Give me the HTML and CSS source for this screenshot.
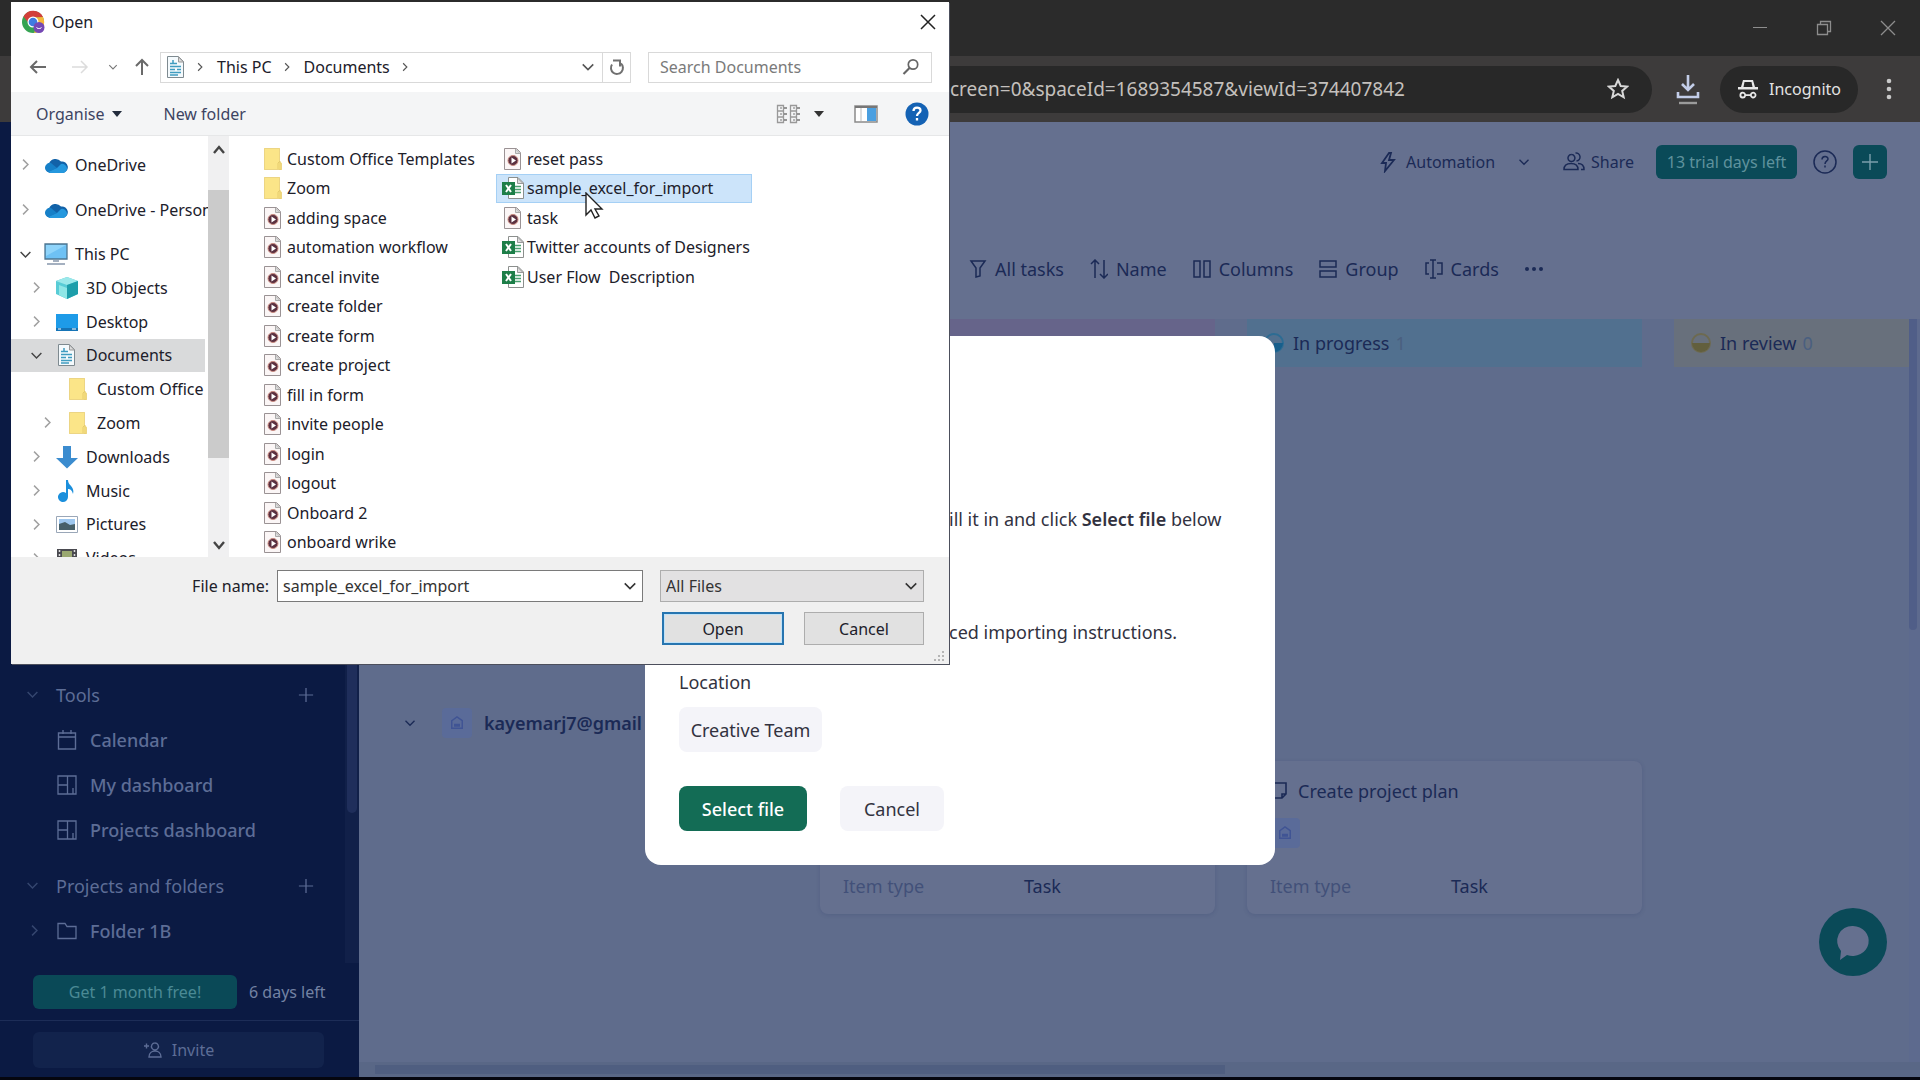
FILE: index.html
```html
<!DOCTYPE html>
<html lang="en">
<head>
    <meta charset="UTF-8">
    <title>Open</title>
    <link rel="stylesheet" href="styles.css">
</head>
<body>
<!-- shared icons -->
<svg class="defs" aria-hidden="true">
    <symbol id="i-right" viewBox="0 0 16 16"><path d="M5 2l6 6-6 6" fill="none" stroke="currentColor" stroke-width="1.8"/></symbol>
    <symbol id="i-down" viewBox="0 0 16 16"><path d="M2 5l6 6 6-6" fill="none" stroke="currentColor" stroke-width="1.8"/></symbol>
    <symbol id="i-up" viewBox="0 0 16 16"><path d="M3 11l5-6 5 6" fill="none" stroke="currentColor" stroke-width="2.4"/></symbol>
    <symbol id="i-plus" viewBox="0 0 18 18"><path d="M9 1v16M1 9h16" fill="none" stroke="currentColor" stroke-width="1.4"/></symbol>
    <symbol id="i-video" viewBox="0 0 24 24">
        <path d="M3.500 1.500h12l4 4v17h-16z" fill="#fbf6f6" stroke="#9a9294"/>
        <path d="M14.500 2v4.500h4.500z" fill="#ddd" stroke="#aaa"/>
        <circle cx="12" cy="13.500" r="5" fill="#5a3040"/>
        <circle cx="12" cy="13.500" r="5" fill="none" stroke="#c98a80" stroke-width="1"/>
        <path d="M10.500 10.500l4.500 3-4.500 3z" fill="#fff"/>
    </symbol>
    <symbol id="i-excel" viewBox="0 0 24 24">
        <path d="M7.500 1.500h9.500l5.500 5.500v15.500h-15z" fill="#fff" stroke="#8b8f8d"/>
        <path d="M16.500 2v5.500h5.500z" fill="#ddd" stroke="#999"/>
        <path d="M14 10.500h6M14 13.500h6M14 16.500h6" stroke="#4ba070" stroke-width="1.400"/>
        <path d="M1 6h13v13h-13z" fill="#1d7e48"/>
        <path d="M5 9l5 7M10 9l-5 7" stroke="#fff" stroke-width="2"/>
    </symbol>
    <symbol id="i-folder" viewBox="0 0 24 24">
        <path d="M3 1h16v14l2 1v7H3z" fill="#fbe588"/>
        <path d="M3.500 1.500h15v14l2 1v6h-17z" fill="none" stroke="#ecd584"/>
        <path d="M17 22v-6l2-2v9" fill="none" stroke="#e6cc6c"/>
    </symbol>
    <symbol id="i-doc" viewBox="0 0 24 24">
        <path d="M3.500 1.500h11l5 5v16h-16z" fill="#f4fafd" stroke="#7e8a90"/>
        <path d="M14.500 2v5h5z" fill="#dcdcdc" stroke="#999"/>
        <path d="M9 5v4M6 8.500h7M6 11.500h11M6 14.500h5M13 14.500h4M6 17.500h11M6 20h8" stroke="#3f9cc0" stroke-width="1.500"/>
    </symbol>
    <symbol id="i-cloud" viewBox="0 0 24 24">
        <path d="M6 20a5 5 0 0 1-1-9.500A7 7 0 0 1 17 8.500a5.500 5.500 0 0 1 2 11.500z" fill="#1262a8"/>
        <path d="M1 14a5 5 0 0 1 6-4l6 5-9 4a5 5 0 0 1-3-5z" fill="#1680c8"/>
        <path d="M4 19l9-4 4-4a5 5 0 0 1 6 4 4.500 4.500 0 0 1-4 5H6z" fill="#2598de"/>
    </symbol>
    <symbol id="i-dash" viewBox="0 0 20 20"><path d="M1 1h18v18H1zM10.500 1v18M1 10h9.500M6 10v0M16 13v6" fill="none" stroke="currentColor" stroke-width="1.300"/></symbol>
    <symbol id="i-people" viewBox="0 0 22 22"><path d="M8.500 3.500a3.500 3.500 0 1 1-.1 0M12.500 2a4 4 0 1 1 1 8M1 18.500c0-4 3-6 7-6s7 2 7 6zM15 12.500c4 0 6 2.500 6 6h-3" fill="none" stroke="currentColor" stroke-width="1.500"/></symbol>
    <symbol id="i-avatar" viewBox="0 0 24 24"><path d="M5 9l7-5 7 5v10H5z" fill="none" stroke="currentColor" stroke-width="2"/><path d="M8 13h8v4h-8z" fill="currentColor"/></symbol>
</svg>

<!-- browser -->
<header class="browser">
    <div class="browser-title">
        <button class="win-btn" aria-label="Minimise"><svg width="16" height="16" viewBox="0 0 16 16"><path d="M1 7.500h14" stroke="currentColor"/></svg></button>
        <button class="win-btn" aria-label="Restore"><svg width="16" height="16" viewBox="0 0 16 16"><path d="M1.500 4.500h10v10h-10zM4.500 4v-2.500h10v10H12" fill="none" stroke="currentColor" stroke-width="1.300"/></svg></button>
        <button class="win-btn" aria-label="Close"><svg width="16" height="16" viewBox="0 0 16 16"><path d="M1 1l14 14M15 1L1 15" stroke="currentColor" stroke-width="1.300"/></svg></button>
    </div>
    <div class="browser-bar">
        <div class="omnibox">
            <span class="url">creen=0&amp;spaceId=1689354587&amp;viewId=374407842</span>
            <svg width="22" height="22" viewBox="0 0 22 22"><path d="M11 2l2.700 6 6.500.600-5 4.300 1.500 6.400L11 16l-5.700 3.300 1.500-6.400-5-4.300 6.500-.600z" fill="none" stroke="#d8d8d8" stroke-width="2"/></svg>
        </div>
        <svg class="download" width="24" height="32" viewBox="0 0 24 32"><path d="M12 2v14M6 11l6 6 6-6M2 19v5h20v-5" fill="none" stroke="#c3cde8" stroke-width="2.600"/><path d="M3 30h18" stroke="#9b9b9b" stroke-width="2.400"/></svg>
        <button class="incognito">
            <svg width="22" height="22" viewBox="0 0 22 22" fill="#e8e8e8"><path d="M6 2h10l2 7h3v2.500H1V9h3zM7.500 4L6.500 9h9l-1-5z" fill-rule="evenodd"/><path d="M2.500 17a3.300 3.300 0 0 1 6.500-.800h4a3.300 3.300 0 1 1 0 1.800h-4a3.300 3.300 0 0 1-6.500-1z"/><circle cx="5.800" cy="17" r="1.500" fill="#282828"/><circle cx="16.200" cy="17" r="1.500" fill="#282828"/></svg>
            Incognito
        </button>
        <button class="dots" aria-label="Menu"><svg width="6" height="22" viewBox="0 0 6 22" fill="#c9c9c9"><circle cx="3" cy="3" r="2.300"/><circle cx="3" cy="11" r="2.300"/><circle cx="3" cy="19" r="2.300"/></svg></button>
    </div>
</header>

<div class="app">
    <aside class="sidebar">
        <div class="side-scroll">
            <nav class="side-nav">
                <div class="side-head"><svg class="arrow"><use href="#i-down"/></svg><span>Tools</span><button aria-label="Add tool"><svg width="16" height="16"><use href="#i-plus"/></svg></button></div>
                <a class="side-item" href="#"><svg viewBox="0 0 20 20"><path d="M1.500 3h17v16h-17zM1.500 7h17M6 0v4M14 0v4" fill="none" stroke="currentColor" stroke-width="1.400"/></svg>Calendar</a>
                <a class="side-item" href="#"><svg><use href="#i-dash"/></svg>My dashboard</a>
                <a class="side-item" href="#"><svg><use href="#i-dash"/></svg>Projects dashboard</a>
                <div class="side-head second"><svg class="arrow"><use href="#i-down"/></svg><span>Projects and folders</span><button aria-label="Add folder"><svg width="16" height="16"><use href="#i-plus"/></svg></button></div>
                <a class="side-item folder" href="#"><svg class="arrow"><use href="#i-right"/></svg><svg viewBox="0 0 20 20"><path d="M1 2.500h7l2 3h9v12H1z" fill="none" stroke="currentColor" stroke-width="1.300"/></svg>Folder 1B</a>
            </nav>
            <div class="side-track"><div class="side-thumb"></div></div>
        </div>
        <div class="trial">
            <button class="free-btn">Get 1 month free!</button>
            <span>6 days left</span>
        </div>
        <div class="invite-row">
            <button class="invite"><svg width="20" height="20" viewBox="0 0 20 20"><path d="M12 3a3.500 3.500 0 1 1-.1 0M6 17c0-8 12-8 12 0zM1 6h5M3.500 3.500v5" fill="none" stroke="currentColor" stroke-width="1.400"/></svg>Invite</button>
        </div>
    </aside>

    <main class="main">
        <div class="top-actions">
            <button class="act auto"><svg width="18" height="22" viewBox="0 0 18 22"><path d="M10 2L3 12h4l-1 8 9-11h-5l2-7z" fill="none" stroke="currentColor" stroke-width="1.800"/></svg>Automation<svg class="auto-arrow" width="12" height="12"><use href="#i-down"/></svg></button>
            <button class="act"><svg width="22" height="22"><use href="#i-people"/></svg>Share</button>
            <button class="green">13 trial days left</button>
            <button class="round" aria-label="Help"><svg width="24" height="24" viewBox="0 0 24 24" fill="none" stroke="currentColor" stroke-width="1.500"><circle cx="12" cy="12" r="11"/><path d="M9 9.500c0-4 6-4 6-.500 0 2-3 2-3 5M12 15.500v2"/></svg></button>
            <button class="green add" aria-label="Add"><svg width="18" height="18"><use href="#i-plus"/></svg></button>
        </div>
        <div class="view-bar">
            <button><svg viewBox="0 0 18 20"><path d="M2 2h14l-5 7v8l-4 1V9z" fill="none" stroke="currentColor" stroke-width="1.500"/></svg>All tasks</button>
            <button><svg viewBox="0 0 18 20"><path d="M5 19V1M1 5l4-4 4 4M14 1v18M10 15l4 4 4-4" fill="none" stroke="currentColor" stroke-width="1.500"/></svg>Name</button>
            <button><svg viewBox="0 0 18 20"><path d="M1 2h6v16H1zM11 2h6v16h-6z" fill="none" stroke="currentColor" stroke-width="1.500"/></svg>Columns</button>
            <button><svg viewBox="0 0 18 20"><path d="M1 2h16v6H1zM1 12h16v6H1z" fill="none" stroke="currentColor" stroke-width="1.500"/></svg>Group</button>
            <button><svg viewBox="0 0 18 20"><path d="M4 4H1v11h3M12 4h5v11h-5M8 1v18M5 1h6M5 19h6" fill="none" stroke="currentColor" stroke-width="1.500"/></svg>Cards</button>
            <button aria-label="More"><svg viewBox="0 0 18 20" fill="currentColor"><circle cx="2" cy="10" r="2"/><circle cx="9" cy="10" r="2"/><circle cx="16" cy="10" r="2"/></svg></button>
        </div>
        <div class="board">
            <div class="board-cols">
                <div class="lane">
                    <button class="lane-toggle" aria-label="Collapse"><svg width="12" height="12"><use href="#i-down"/></svg></button>
                    <span class="avatar"><svg width="18" height="18"><use href="#i-avatar"/></svg></span>
                    <b>kayemarj7@gmail</b>
                </div>
                <section class="col">
                    <div class="col-head pink"></div>
                    <article class="card">
                        <dl><dt>Item type</dt><dd>Task</dd></dl>
                    </article>
                </section>
                <section class="col">
                    <h2 class="col-head blue"><svg width="20" height="20" viewBox="0 0 20 20"><circle cx="10" cy="10" r="9" fill="none" stroke="#2c6c93" stroke-width="2"/><path d="M10 10h9a9 9 0 0 1-9 9z" fill="#175f8c"/></svg>In progress <span>1</span></h2>
                    <article class="card">
                        <h3><svg width="18" height="18" viewBox="0 0 18 18"><path d="M1 1h15v11l-4 4H1zM16 12h-4v4" fill="none" stroke="currentColor" stroke-width="1.600"/></svg>Create project plan</h3>
                        <span class="avatar"><svg width="18" height="18"><use href="#i-avatar"/></svg></span>
                        <dl><dt>Item type</dt><dd>Task</dd></dl>
                    </article>
                </section>
                <section class="col last">
                    <h2 class="col-head sand"><svg width="20" height="20" viewBox="0 0 20 20"><circle cx="10" cy="10" r="9" fill="none" stroke="#6d6a50" stroke-width="2"/><path d="M1 10h18a9 9 0 0 1-18 0z" fill="#625f3d"/></svg>In review <span>0</span></h2>
                </section>
            </div>
            <div class="v-track"><div class="v-thumb"></div></div>
            <div class="h-track"><div class="h-thumb"></div></div>
        </div>
    </main>

    <button class="chat" aria-label="Chat"><svg width="40" height="40" viewBox="0 0 40 40"><path d="M20 4a16 15 0 1 1-6 29l-7 5 1-9A15 15 0 0 1 20 4z" fill="#65708f"/></svg></button>

    <div class="overlay">
        <div class="modal">
            <p>ill it in and click <b>Select file</b> below</p>
            <p>ced importing instructions.</p>
            <div class="location">Location</div>
            <button class="grey team">Creative Team</button>
            <div class="modal-btns">
                <button class="select-file">Select file</button>
                <button class="grey">Cancel</button>
            </div>
        </div>
    </div>
</div>

<!-- file picker window -->
<div class="picker">
    <div class="picker-title">
        <svg width="24" height="24" viewBox="0 0 24 24"><circle cx="12" cy="12" r="11" fill="#35a352"/><path d="M2.500 6.500A11 11 0 0 1 22 7l-10 .500-4 6z" fill="#d23f3a"/><path d="M22 7a11 11 0 0 1-9 16l4-10-5-5.500z" fill="#f6b73a"/><circle cx="12" cy="12" r="5.500" fill="#fff"/><circle cx="12" cy="12" r="4.300" fill="#3f7be0"/><circle cx="18" cy="17.500" r="5.500" fill="#7548b4"/><path d="M15.500 17l1.500 2 1-1 1 1 1.500-2" fill="none" stroke="#e6dcf5"/></svg>
        <span>Open</span>
        <button class="close" aria-label="Close"><svg width="16" height="16" viewBox="0 0 16 16"><path d="M1 1l14 14M15 1L1 15" stroke="#222" stroke-width="1.500"/></svg></button>
    </div>
    <div class="picker-nav">
        <button aria-label="Back"><svg width="18" height="16" viewBox="0 0 18 16"><path d="M17 8H2M8 2L2 8l6 6" fill="none" stroke="#6a6a6a" stroke-width="2"/></svg></button>
        <button aria-label="Forward"><svg width="18" height="16" viewBox="0 0 18 16"><path d="M1 8h15M10 2l6 6-6 6" fill="none" stroke="#dcdcdc" stroke-width="1.500"/></svg></button>
        <button class="recent" aria-label="Recent"><svg width="10" height="10"><use href="#i-down"/></svg></button>
        <button aria-label="Up"><svg width="16" height="18" viewBox="0 0 16 18"><path d="M8 17V2M2 8l6-6 6 6" fill="none" stroke="#6a6a6a" stroke-width="2"/></svg></button>
        <div class="address">
            <svg width="24" height="24"><use href="#i-doc"/></svg>
            <svg class="sep" width="10" height="10"><use href="#i-right"/></svg>
            <a href="#">This PC</a>
            <svg class="sep" width="10" height="10"><use href="#i-right"/></svg>
            <a href="#">Documents</a>
            <svg class="sep" width="10" height="10"><use href="#i-right"/></svg>
            <button class="addr-drop" aria-label="Previous locations"><svg width="14" height="14"><use href="#i-down"/></svg></button>
            <button class="refresh" aria-label="Refresh"><svg width="18" height="18" viewBox="0 0 18 18"><path d="M4 6.500a6 6 0 1 0 9-1M5 2.500h7v6" fill="none" stroke="#707070" stroke-width="2"/></svg></button>
        </div>
        <label class="search">
            <input type="text" placeholder="Search Documents" aria-label="Search Documents">
            <svg width="18" height="18" viewBox="0 0 18 18"><circle cx="11" cy="6.500" r="4.700" fill="none" stroke="#666" stroke-width="1.700"/><path d="M7.500 10L1.500 16" stroke="#666" stroke-width="2.200"/></svg>
        </label>
    </div>
    <div class="picker-tools">
        <button>Organise <svg width="12" height="12" viewBox="0 0 12 12"><path d="M1 3h10L6 9z" fill="#222c3c"/></svg></button>
        <button>New folder</button>
        <button class="view-btn" aria-label="Change view">
            <svg width="24" height="20" viewBox="0 0 24 20"><path d="M1.500 1.500h6v17h-6zM1.500 7h6M1.500 13h6M14.500 1.500h6v17h-6zM14.500 7h6M14.500 13h6" fill="none" stroke="#999" stroke-width="1.300"/><path d="M8 4h3M8 10h3M8 16h3M21 4h3M21 10h3M21 16h3" stroke="#777" stroke-width="1.500"/><path d="M4 4h2M4 10h2M4 16h2M17 4h2M17 10h2M17 16h2" stroke="#777"/></svg>
            <svg width="12" height="12" viewBox="0 0 12 12"><path d="M1 3h10L6 9z" fill="#333"/></svg>
        </button>
        <button aria-label="Preview pane"><svg width="24" height="18" viewBox="0 0 24 18"><path d="M1 1h22v16H1z" fill="#fff" stroke="#8b8b8b" stroke-width="1.500"/><path d="M1 2h22" stroke="#777" stroke-width="2"/><path d="M13 3h9v13h-9z" fill="#4a9fe0"/><path d="M7 3v13" stroke="#bbb"/></svg></button>
        <button aria-label="Get help"><svg width="24" height="24" viewBox="0 0 24 24"><circle cx="12" cy="12" r="11.500" fill="#1462b4"/><path d="M8.500 9c0-4.500 7-4.500 7-.500 0 2.500-3.500 2.500-3.500 5.500M12 16v2.500" fill="none" stroke="#fff" stroke-width="2.300"/></svg></button>
    </div>
    <div class="picker-body">
        <div class="tree">
            <div class="node root"><svg class="arrow"><use href="#i-right"/></svg><svg><use href="#i-cloud"/></svg>OneDrive</div>
            <div class="node root"><svg class="arrow"><use href="#i-right"/></svg><svg><use href="#i-cloud"/></svg>OneDrive - Person</div>
            <div class="node pc"><svg class="arrow open"><use href="#i-down"/></svg><svg viewBox="0 0 24 24"><path d="M1 2h22v15H1z" fill="#6ec1f4" stroke="#4d7590" stroke-width="1.300"/><path d="M2 3h20L2 14z" fill="#8fd4fa"/><path d="M9 18h6v2H9zM3 21h18v2H3z" fill="#a4b0c0"/></svg>This PC</div>
            <div class="branch">
                <div class="node"><svg class="arrow"><use href="#i-right"/></svg><svg viewBox="0 0 24 24"><path d="M1 5l11-4 11 4v13l-11 5-11-5z" fill="#58ccd6"/><path d="M1 5l11 4 11-4-11-4z" fill="#9be8ea"/><path d="M12 9v14l11-5V5z" fill="#1d9eaa"/><path d="M4 9l8 3v11l-8-4z" fill="#8fe6e6"/></svg>3D Objects</div>
                <div class="node"><svg class="arrow"><use href="#i-right"/></svg><svg viewBox="0 0 24 24"><path d="M1 4h22v17H1z" fill="#1e9be8"/><path d="M1 18h22v3H1z" fill="#1674b6"/><path d="M3 19h3M17 19h4" stroke="#fff"/></svg>Desktop</div>
                <div class="node active"><svg class="arrow open"><use href="#i-down"/></svg><svg><use href="#i-doc"/></svg>Documents</div>
                <div class="node deep"><svg class="arrow"></svg><svg><use href="#i-folder"/></svg>Custom Office</div>
                <div class="node deep"><svg class="arrow"><use href="#i-right"/></svg><svg><use href="#i-folder"/></svg>Zoom</div>
                <div class="node"><svg class="arrow"><use href="#i-right"/></svg><svg viewBox="0 0 24 24"><path d="M8 1h8v12h7L12 23.500 1 13h7z" fill="#3b8ccf"/></svg>Downloads</div>
                <div class="node"><svg class="arrow"><use href="#i-right"/></svg><svg viewBox="0 0 24 24"><path d="M11 1h2c0 6 7 6 5 14-1-4-3-5-5-5v8a5 5 0 1 1-2-4z" fill="#1b8fdc"/></svg>Music</div>
                <div class="node"><svg class="arrow"><use href="#i-right"/></svg><svg viewBox="0 0 24 24"><path d="M1.500 4.500h21v16h-21z" fill="#fff" stroke="#9aa7b8"/><path d="M4 7h16v11H4z" fill="#9dc7ef"/><path d="M4 12l6-2 5 3 5-1v6H4z" fill="#47606a"/></svg>Pictures</div>
                <div class="node"><svg class="arrow"><use href="#i-right"/></svg><svg viewBox="0 0 24 24"><path d="M2 3h20v18H2z" fill="#4a4a50"/><path d="M7 5h10v6H7z" fill="#9aa870"/><path d="M7 13h10v6H7z" fill="#c9b54e"/><path d="M4.500 4v16M19.500 4v16" stroke="#ddd" stroke-width="1.500" stroke-dasharray="2 2"/></svg>Videos</div>
            </div>
        </div>
        <div class="tree-track">
            <svg width="16" height="16"><use href="#i-up"/></svg>
            <div class="tree-thumb"></div>
            <svg class="flip" width="16" height="16"><use href="#i-up"/></svg>
        </div>
        <ul class="files">
            <li><svg><use href="#i-folder"/></svg>Custom Office Templates</li>
            <li><svg><use href="#i-folder"/></svg>Zoom</li>
            <li><svg><use href="#i-video"/></svg>adding space</li>
            <li><svg><use href="#i-video"/></svg>automation workflow</li>
            <li><svg><use href="#i-video"/></svg>cancel invite</li>
            <li><svg><use href="#i-video"/></svg>create folder</li>
            <li><svg><use href="#i-video"/></svg>create form</li>
            <li><svg><use href="#i-video"/></svg>create project</li>
            <li><svg><use href="#i-video"/></svg>fill in form</li>
            <li><svg><use href="#i-video"/></svg>invite people</li>
            <li><svg><use href="#i-video"/></svg>login</li>
            <li><svg><use href="#i-video"/></svg>logout</li>
            <li><svg><use href="#i-video"/></svg>Onboard 2</li>
            <li><svg><use href="#i-video"/></svg>onboard wrike</li>
            <li><svg><use href="#i-video"/></svg>reset pass</li>
            <li class="selected"><svg><use href="#i-excel"/></svg>sample_excel_for_import</li>
            <li><svg><use href="#i-video"/></svg>task</li>
            <li><svg><use href="#i-excel"/></svg>Twitter accounts of Designers</li>
            <li><svg><use href="#i-excel"/></svg>User Flow&nbsp; Description</li>
        </ul>
    </div>
    <div class="picker-foot">
        <label for="fname">File name:</label>
        <div class="combo">
            <input type="text" id="fname" value="sample_excel_for_import">
            <svg width="14" height="14"><use href="#i-down"/></svg>
        </div>
        <div class="combo types">
            <select aria-label="File type"><option>All Files</option></select>
            <svg width="14" height="14"><use href="#i-down"/></svg>
        </div>
        <div class="foot-btns">
            <button class="open-btn">Open</button>
            <button>Cancel</button>
        </div>
    </div>
    <svg class="grip" width="12" height="12" viewBox="0 0 12 12" fill="#b5b5b5"><path d="M9 1h2v2H9zM9 5h2v2H9zM9 9h2v2H9zM5 5h2v2H5zM5 9h2v2H5zM1 9h2v2H1z"/></svg>
    <svg class="cursor" width="20" height="28" viewBox="0 0 20 28"><path d="M2 1v22l5-5 4 8 4-2-4-7h7z" fill="#fff" stroke="#222" stroke-width="1.400"/></svg>
</div>
</body>
</html>
```
FILE: styles.css
```css
* {
    box-sizing: border-box;
}

body {
    margin: 0;
    height: 100vh;
    padding-bottom: 3px;
    display: flex;
    flex-direction: column;
    position: relative;
    overflow: hidden;
    background: #05060f;
    font-family: "Noto Sans", "Open Sans", sans-serif;
    font-size: 18px;
    line-height: 24px;
}

button, input, select {
    font: inherit;
    color: inherit;
    margin: 0;
    padding: 0;
    border: none;
    background: none;
    outline: none;
}

a {
    color: inherit;
    text-decoration: none;
}

svg {
    display: block;
    flex: none;
}

.defs {
    width: 0;
    height: 0;
    position: absolute;
}

/* browser */
.browser {
    background: #2b2b2b;
}

.browser-title {
    height: 56px;
    display: flex;
    justify-content: flex-end;
    align-items: center;
    gap: 48px;
    padding-right: 24px;
    color: #8d8d8d;
}

.browser-bar {
    height: 66px;
    display: flex;
    align-items: center;
    background: #3d3b3b;
    padding: 0 28px 0 100px;
}

.omnibox {
    flex: 1;
    height: 47px;
    border-radius: 24px;
    background: #282828;
    color: #c4c0bd;
    display: flex;
    align-items: center;
    justify-content: space-between;
    padding: 0 23px 0 850px;
    font-size: 19px;
}

.download {
    margin: 0 20px 0 24px;
}

.incognito {
    height: 47px;
    width: 138px;
    border-radius: 24px;
    background: #282828;
    color: #e3e3e3;
    display: flex;
    align-items: center;
    gap: 10px;
    padding-left: 17px;
    font-size: 16px;
}

.dots {
    margin-left: 28px;
}

/* app */
.app {
    flex: 1;
    min-height: 0;
    display: flex;
    position: relative;
}

.sidebar {
    width: 359px;
    background: #0b1a43;
    color: #5d6d96;
    display: flex;
    flex-direction: column;
}

.side-scroll {
    flex: 1;
    display: flex;
    align-items: stretch;
}

.side-nav {
    flex: 1;
    display: flex;
    flex-direction: column;
    justify-content: flex-end;
    padding-bottom: 10px;
}

.side-head, .side-item {
    height: 45px;
    display: flex;
    align-items: center;
}

.side-head {
    padding: 0 31px 0 26px;
}

.side-head.second {
    margin-top: 11px;
}

.side-head span {
    flex: 1;
}

.sidebar .arrow {
    width: 13px;
    height: 13px;
    margin-right: 17px;
    color: #35466f;
}

.side-item {
    padding-left: 57px;
    gap: 13px;
    font-weight: 500;
}

.side-item svg {
    width: 20px;
    height: 20px;
}

.side-item.folder {
    padding-left: 28px;
}

.side-item.folder .arrow {
    margin-right: 3px;
}

.side-track {
    width: 14px;
    background: #112049;
}

.side-thumb {
    width: 10px;
    height: 691px;
    margin: 0 auto;
    border-radius: 0 0 5px 5px;
    background: #1f2e5b;
}

.trial {
    height: 58px;
    display: flex;
    align-items: center;
    gap: 12px;
    padding-left: 33px;
    font-size: 16px;
    color: #7382a3;
    border-bottom: 1px solid #1d2d57;
}

.free-btn {
    width: 204px;
    height: 34px;
    border-radius: 6px;
    background: #0a4957;
    color: #4a8a95;
}

.invite-row {
    height: 56px;
    padding: 11px 35px 9px 33px;
}

.invite {
    width: 100%;
    height: 36px;
    border-radius: 6px;
    background: #12234c;
    display: flex;
    align-items: center;
    justify-content: center;
    gap: 9px;
    font-size: 16px;
}

.main {
    flex: 1;
    min-width: 0;
    display: flex;
    flex-direction: column;
    background: #65708f;
    color: #1b2a56;
}

.top-actions {
    height: 80px;
    display: flex;
    align-items: center;
    justify-content: flex-end;
    padding-right: 33px;
    font-size: 16px;
}

.act {
    display: flex;
    align-items: center;
    gap: 6px;
    height: 34px;
    margin-right: 22px;
}

.auto {
    gap: 9px;
    margin-right: 33px;
}

.auto-arrow {
    margin-left: 14px;
}

.green {
    width: 141px;
    height: 34px;
    border-radius: 6px;
    background: #0a4a58;
    color: #5f929d;
}

.green.add {
    width: 34px;
    display: flex;
    align-items: center;
    justify-content: center;
    color: #7b9fac;
}

.round {
    margin: 0 16px;
}

.view-bar {
    height: 134px;
    display: flex;
    align-items: center;
    gap: 26px;
    padding-left: 610px;
}

.view-bar button {
    display: flex;
    align-items: center;
    gap: 8px;
}

.view-bar svg {
    width: 18px;
    height: 20px;
}

.board {
    flex: 1;
    display: grid;
    grid-template-columns: 1fr 11px;
    grid-template-rows: 1fr 15px;
    background: #5f6c8c;
    margin-top: -17px;
}

.board-cols {
    display: flex;
    gap: 32px;
    min-width: 0;
    overflow: hidden;
}

.lane {
    width: 429px;
    display: flex;
    align-items: center;
    align-self: flex-start;
    height: 30px;
    margin-top: 389px;
    padding-left: 45px;
    font-weight: 600;
}

.lane b {
    font-weight: 600;
    margin-left: 12px;
}

.lane-toggle {
    margin-right: 26px;
}

.avatar {
    width: 30px;
    height: 30px;
    border-radius: 4px;
    background: #5a6b99;
    color: #405494;
    display: flex;
    align-items: center;
    justify-content: center;
}

.col {
    width: 395px;
    flex: none;
}

.col.last {
    flex: 1;
}

.col-head {
    height: 48px;
    margin: 0;
    display: flex;
    align-items: center;
    gap: 9px;
    padding-left: 17px;
    font-size: 18px;
    font-weight: 400;
}

.col-head span {
    color: #4a5f80;
    margin-left: -3px;
}

.pink {
    background: #66648a;
}

.blue {
    background: #51708f;
}

.sand {
    background: #68707c;
}

.card {
    height: 153px;
    margin-top: 394px;
    padding: 18px 23px 16px;
    border-radius: 8px;
    background: #65708f;
    box-shadow: 0 1px 4px rgba(40, 55, 100, .2);
    display: flex;
    flex-direction: column;
}

.card h3 {
    margin: 0;
    font-size: 18px;
    font-weight: 400;
    display: flex;
    align-items: center;
    gap: 10px;
}

.card .avatar {
    margin-top: 15px;
}

.card dl {
    display: flex;
    margin: auto 0 0;
    color: #425079;
}

.card dt {
    width: 181px;
}

.card dd {
    margin: 0;
    color: #1b2a56;
}

.v-track {
    background: #5d6a8e;
}

.v-thumb {
    height: 311px;
    width: 8px;
    border-radius: 0 0 5px 5px;
    background: #505e88;
}

.h-track {
    grid-column: 1 / 3;
    background: #596786;
    padding: 3px 0 3px 16px;
}

.h-thumb {
    width: 55%;
    height: 9px;
    background: #4f5e80;
}

.chat {
    position: absolute;
    right: 33px;
    bottom: 101px;
    width: 68px;
    height: 68px;
    border-radius: 50%;
    background: #0a4a58;
    display: flex;
    align-items: center;
    justify-content: center;
}

/* import modal */
.overlay {
    position: absolute;
    inset: 0;
    padding-top: 2px;
    display: flex;
    align-items: center;
    justify-content: center;
}

.modal {
    width: 630px;
    padding: 171px 34px 34px;
    border-radius: 16px;
    background: #fff;
    color: #32323f;
}

.modal p {
    margin: 0 0 89px 270px;
    white-space: nowrap;
}

.modal p + p {
    margin-bottom: 26px;
}

.modal b {
    font-weight: 600;
}

.grey, .select-file {
    height: 45px;
    width: 104px;
    border-radius: 8px;
    background: #f4f4f9;
}

.team {
    width: 143px;
    margin-top: 13px;
}

.select-file {
    width: 128px;
    background: #136c55;
    color: #fff;
    font-weight: 500;
}

.modal-btns {
    display: flex;
    gap: 33px;
    margin-top: 34px;
}

/* file picker */
.picker {
    position: absolute;
    left: 11px;
    top: 2px;
    width: 938px;
    background: #fff;
    color: #20202a;
    font-size: 16px;
    box-shadow: 1px 1px 0 #4c4f5c;
}

.picker-title {
    height: 38px;
    display: flex;
    align-items: center;
    gap: 7px;
    padding: 1px 13px 0 10px;
}

.close {
    margin-left: auto;
}

.picker-nav {
    height: 52px;
    display: flex;
    align-items: center;
    padding: 2px 17px 0 18px;
}

.picker-nav > button {
    margin-right: 24px;
}

.picker-nav > .recent {
    margin-right: 16px;
    color: #777;
}

.picker-nav > button:nth-of-type(2) {
    margin-right: 19px;
}

.picker-nav > button:nth-of-type(4) {
    margin-right: 10px;
}

.address {
    flex: 1;
    height: 31px;
    border: 1px solid #d9d9d9;
    display: flex;
    align-items: center;
    padding-left: 3px;
}

.sep {
    margin: 0 12px 0 7px;
    color: #555;
}

.address a + .sep {
    margin-left: 10px;
}

.addr-drop {
    margin-left: auto;
    margin-right: 7px;
    color: #555;
}

.refresh {
    width: 28px;
    height: 29px;
    border-left: 1px solid #d9d9d9;
    display: flex;
    align-items: center;
    justify-content: center;
}

.search {
    width: 284px;
    height: 31px;
    margin-left: 17px;
    border: 1px solid #d9d9d9;
    display: flex;
    align-items: center;
    padding: 0 11px;
}

.search input {
    flex: 1;
    min-width: 0;
}

.search input::placeholder {
    color: #7a7a7a;
}

.picker-tools {
    height: 44px;
    display: flex;
    align-items: center;
    padding: 0 20px 0 25px;
    background: #f4f5f6;
    border-bottom: 1px solid #e6e7e8;
    color: #3d4462;
}

.picker-tools button {
    display: flex;
    align-items: center;
    gap: 7px;
    margin-right: 27px;
}

.picker-tools button:first-child {
    margin-right: 40px;
}

.picker-tools button:last-child {
    margin-right: 0;
}

.picker-tools .view-btn {
    margin-left: auto;
    margin-right: 29px;
    gap: 13px;
}

.picker-body {
    height: 421px;
    display: flex;
}

.tree {
    width: 197px;
    overflow: hidden;
    padding-top: 6px;
}

.node {
    display: flex;
    align-items: center;
    gap: 7px;
    padding-left: 8px;
    white-space: nowrap;
}

.node svg {
    width: 24px;
    height: 24px;
}

.node .arrow {
    width: 13px;
    height: 13px;
    margin-right: 5px;
    color: #a0a0a0;
}

.node .open {
    color: #444;
}

.root {
    height: 45px;
}

.pc {
    height: 34px;
    margin-top: 5px;
}

.branch {
    height: 304px;
    display: grid;
    grid-auto-rows: 1fr;
}

.branch .node {
    padding-left: 19px;
}

.branch .deep {
    padding-left: 30px;
}

.active {
    background: #d9dadb;
    margin-right: 3px;
}

.tree-track {
    width: 21px;
    background: #f0f0f1;
    color: #444;
    display: flex;
    flex-direction: column;
    align-items: center;
    padding: 6px 0 4px;
}

.tree-thumb {
    width: 100%;
    height: 268px;
    margin: 32px 0 auto;
    background: #cbcbcb;
}

.flip {
    transform: rotate(180deg);
}

.files {
    list-style: none;
    margin: 0;
    padding: 8px 0 0 27px;
    display: grid;
    grid-auto-flow: column;
    grid-template-rows: repeat(14, 1fr);
    grid-template-columns: 240px 256px;
}

.files li {
    display: flex;
    align-items: center;
    gap: 2px;
    padding-left: 5px;
    white-space: nowrap;
    min-height: 0;
}

.files svg {
    width: 24px;
    height: 24px;
}

.files .selected {
    background: #cce4fa;
    border: 1px solid #a5d0f5;
    padding-left: 4px;
}

.picker-foot {
    display: grid;
    grid-template-columns: 258px 366px 264px;
    grid-template-rows: 32px 33px;
    row-gap: 10px;
    padding: 13px 0 19px;
    background: #f0f0f0;
}

.picker-foot > label {
    justify-self: end;
    align-self: center;
}

.combo {
    margin-left: 8px;
    width: 366px;
    background: #fff;
    border: 1px solid #7a7a7a;
    display: flex;
    align-items: center;
    padding: 0 5px;
    color: #333;
}

.combo input, .combo select {
    flex: 1;
    min-width: 0;
    appearance: none;
}

.types {
    margin-left: 25px;
    width: 264px;
    background: #e2e1e2;
    border-color: #adadad;
}

.foot-btns {
    grid-column: 3;
    margin-left: 27px;
    width: 262px;
    display: flex;
    gap: 20px;
}

.foot-btns button {
    flex: 1;
    border: 1px solid #adadad;
    background: #e1e1e1;
}

.foot-btns .open-btn {
    border: 2px solid #2775b0;
    box-shadow: inset 0 0 0 1px #bfe2f8;
}

.grip {
    position: absolute;
    right: 4px;
    bottom: 2px;
}

.cursor {
    position: absolute;
    left: 573px;
    top: 190px;
}
```
